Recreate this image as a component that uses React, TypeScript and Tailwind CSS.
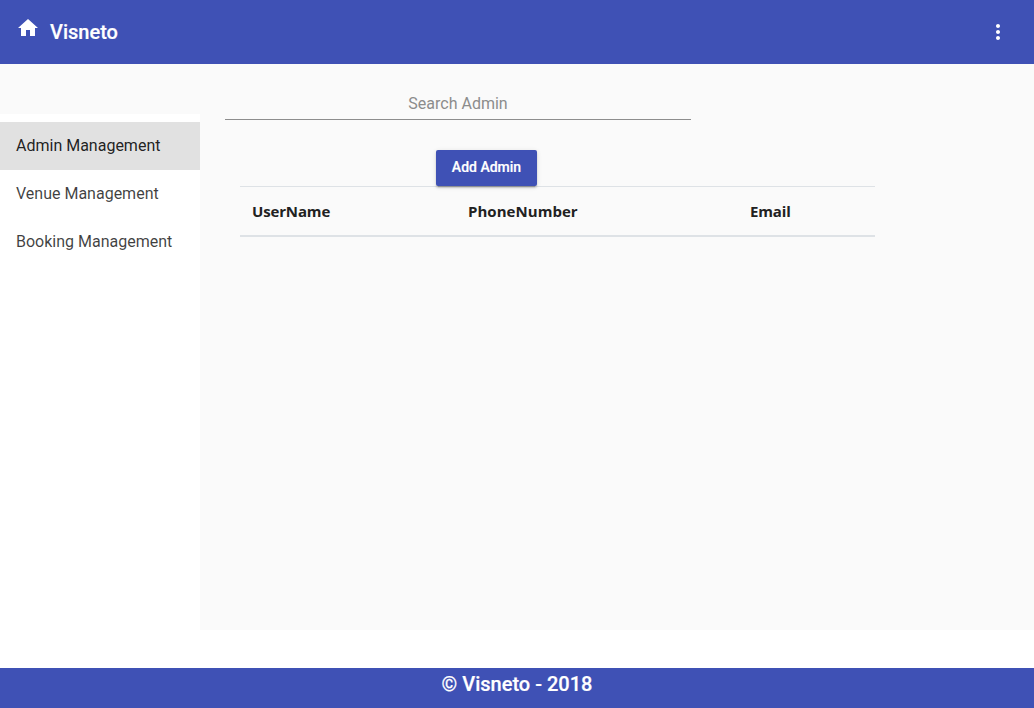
import React from "react";

const navItems = ["Admin Management", "Venue Management", "Booking Management"];

function Header() {
  return (
    <header className="flex h-16 shrink-0 items-center bg-[#3f51b5] px-4 text-white">
      <svg viewBox="0 0 24 24" className="mb-2 h-6 w-6 fill-current" aria-hidden="true">
        <path d="M10 20v-6h4v6h5v-8h3L12 3 2 12h3v8z" />
      </svg>
      <span className="ml-2.5 text-[20px] leading-8 font-medium [-webkit-text-stroke:0.2px_white]">Visneto</span>
      <button className="ml-auto flex h-10 w-10 items-center justify-center" aria-label="Menu">
        <svg viewBox="0 0 24 24" className="h-6 w-6 fill-current" aria-hidden="true">
          <path d="M12 8c1.1 0 2-.9 2-2s-.9-2-2-2-2 .9-2 2 .9 2 2 2zm0 2c-1.1 0-2 .9-2 2s.9 2 2 2 2-.9 2-2-.9-2-2-2zm0 6c-1.1 0-2 .9-2 2s.9 2 2 2 2-.9 2-2-.9-2-2-2z" />
        </svg>
      </button>
    </header>
  );
}

function Sidebar() {
  return (
    <nav className="mt-[50px] w-[200px] shrink-0 bg-white pt-2">
      {navItems.map((label, i) => (
        <a
          key={label}
          className={
            i === 0
              ? "flex h-12 items-center bg-[#e1e1e1] px-4 pb-px text-[16px] font-normal whitespace-nowrap text-black/87"
              : "flex h-12 items-center px-4 pb-px text-[16px] font-normal whitespace-nowrap text-black/75"
          }
        >
          {label}
        </a>
      ))}
    </nav>
  );
}

export default function App() {
  return (
    <div className="flex h-[708px] w-[1034px] flex-col overflow-hidden bg-white font-[Roboto,sans-serif]">
      <Header />
      <div className="flex h-[566px] bg-[#fafafa]">
        <Sidebar />
        <main className="flex flex-col pl-[25px]">
          <input
            className="mt-6 h-8 w-[466px] border-b border-[#8d8d8d] text-center text-[16px] font-normal text-black/87 outline-none placeholder:text-[#8c8c8c]"
            placeholder="Search Admin"
          />
          <button className="relative mt-[30px] ml-[211px] h-9 w-[101px] rounded-[2px] bg-[#3f51b5] pb-0.5 text-[14px] font-medium text-white shadow-[0_3px_1px_-2px_rgba(0,0,0,0.2),0_2px_2px_0_rgba(0,0,0,0.14),0_1px_5px_0_rgba(0,0,0,0.12)] [-webkit-text-stroke:0.2px_white]">
            Add Admin
          </button>
          <table className="ml-[15px] w-[635px] table-fixed border-t border-b-2 border-[#dee2e6] text-[15px] font-bold tracking-[-0.01em] text-[#212121]">
            <thead>
              <tr className="h-[49px] text-left font-['Open_Sans',sans-serif]">
                <th className="w-[216px] px-3">UserName</th>
                <th className="w-[282px] px-3 tracking-[0.003em]">PhoneNumber</th>
                <th className="px-3">Email</th>
              </tr>
            </thead>
          </table>
        </main>
      </div>
      <footer className="mt-auto h-10 bg-[#3f51b5] text-center text-[20px] leading-8 font-medium text-white [-webkit-text-stroke:0.2px_white]">
        © Visneto - 2018
      </footer>
    </div>
  );
}
